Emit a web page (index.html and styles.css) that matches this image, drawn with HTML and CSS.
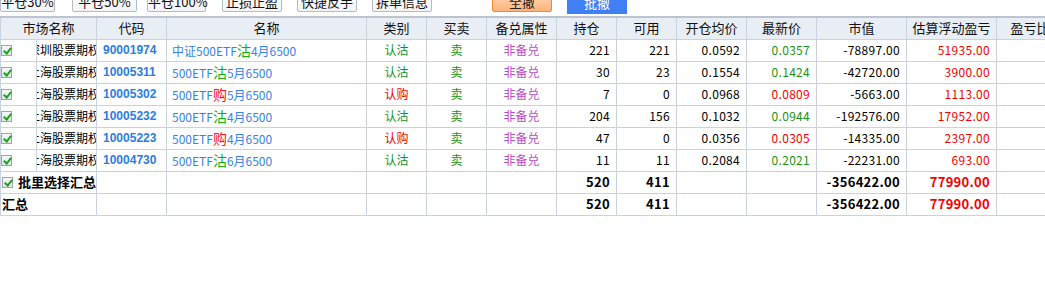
FILE: index.html
```html
<!DOCTYPE html>
<html lang="zh-CN">
<head>
    <meta charset="UTF-8">
    <title>持仓列表</title>
    <link rel="stylesheet" href="styles.css">
</head>
<body>
    <div class="toolbar">
        <button class="tbtn w55">平仓30%</button>
        <button class="tbtn w65 ml17">平仓50%</button>
        <button class="tbtn w59 ml10">平仓100%</button>
        <button class="tbtn w60 ml16">止损止盈</button>
        <button class="tbtn w60 ml15">快捷反手</button>
        <button class="tbtn w60 ml15">拆单信息</button>
        <button class="tbtn cancel-all">全撤</button>
        <button class="tbtn cancel-batch">批撤</button>
    </div>

    <table class="grid">
        <colgroup>
            <col style="width:36px"><col style="width:60px"><col style="width:70px"><col style="width:200px">
            <col style="width:60px"><col style="width:60px"><col style="width:70px"><col style="width:60px">
            <col style="width:60px"><col style="width:70px"><col style="width:70px"><col style="width:90px">
            <col style="width:90px"><col style="width:80px">
        </colgroup>
        <thead>
            <tr>
                <th colspan="2">市场名称</th>
                <th>代码</th>
                <th>名称</th>
                <th>类别</th>
                <th>买卖</th>
                <th>备兑属性</th>
                <th>持仓</th>
                <th>可用</th>
                <th>开仓均价</th>
                <th>最新价</th>
                <th>市值</th>
                <th>估算浮动盈亏</th>
                <th>盈亏比例</th>
            </tr>
        </thead>
        <tbody>
            <tr>
                <td class="chk"><span class="box"></span></td>
                <td><div class="market">深圳股票期权</div></td>
                <td class="code">90001974</td>
                <td class="name">中证500ETF<span class="put">沽</span>4月6500</td>
                <td class="c green">认沽</td>
                <td class="c green">卖</td>
                <td class="c purple">非备兑</td>
                <td class="n">221</td>
                <td class="n">221</td>
                <td class="n">0.0592</td>
                <td class="n green">0.0357</td>
                <td class="n">-78897.00</td>
                <td class="n red">51935.00</td>
                <td></td>
            </tr>
            <tr>
                <td class="chk"><span class="box"></span></td>
                <td><div class="market">上海股票期权</div></td>
                <td class="code">10005311</td>
                <td class="name">500ETF<span class="put">沽</span>5月6500</td>
                <td class="c green">认沽</td>
                <td class="c green">卖</td>
                <td class="c purple">非备兑</td>
                <td class="n">30</td>
                <td class="n">23</td>
                <td class="n">0.1554</td>
                <td class="n green">0.1424</td>
                <td class="n">-42720.00</td>
                <td class="n red">3900.00</td>
                <td></td>
            </tr>
            <tr>
                <td class="chk"><span class="box"></span></td>
                <td><div class="market">上海股票期权</div></td>
                <td class="code">10005302</td>
                <td class="name">500ETF<span class="call">购</span>5月6500</td>
                <td class="c red">认购</td>
                <td class="c green">卖</td>
                <td class="c purple">非备兑</td>
                <td class="n">7</td>
                <td class="n">0</td>
                <td class="n">0.0968</td>
                <td class="n red">0.0809</td>
                <td class="n">-5663.00</td>
                <td class="n red">1113.00</td>
                <td></td>
            </tr>
            <tr>
                <td class="chk"><span class="box"></span></td>
                <td><div class="market">上海股票期权</div></td>
                <td class="code">10005232</td>
                <td class="name">500ETF<span class="put">沽</span>4月6500</td>
                <td class="c green">认沽</td>
                <td class="c green">卖</td>
                <td class="c purple">非备兑</td>
                <td class="n">204</td>
                <td class="n">156</td>
                <td class="n">0.1032</td>
                <td class="n green">0.0944</td>
                <td class="n">-192576.00</td>
                <td class="n red">17952.00</td>
                <td></td>
            </tr>
            <tr>
                <td class="chk"><span class="box"></span></td>
                <td><div class="market">上海股票期权</div></td>
                <td class="code">10005223</td>
                <td class="name">500ETF<span class="call">购</span>4月6500</td>
                <td class="c red">认购</td>
                <td class="c green">卖</td>
                <td class="c purple">非备兑</td>
                <td class="n">47</td>
                <td class="n">0</td>
                <td class="n">0.0356</td>
                <td class="n red">0.0305</td>
                <td class="n">-14335.00</td>
                <td class="n red">2397.00</td>
                <td></td>
            </tr>
            <tr>
                <td class="chk"><span class="box"></span></td>
                <td><div class="market">上海股票期权</div></td>
                <td class="code">10004730</td>
                <td class="name">500ETF<span class="put">沽</span>6月6500</td>
                <td class="c green">认沽</td>
                <td class="c green">卖</td>
                <td class="c purple">非备兑</td>
                <td class="n">11</td>
                <td class="n">11</td>
                <td class="n">0.2084</td>
                <td class="n green">0.2021</td>
                <td class="n">-22231.00</td>
                <td class="n red">693.00</td>
                <td></td>
            </tr>
            <tr class="sum">
                <td colspan="2" class="label"><span class="box"></span>批里选择汇总</td>
                <td></td>
                <td></td>
                <td></td>
                <td></td>
                <td></td>
                <td class="n">520</td>
                <td class="n">411</td>
                <td></td>
                <td></td>
                <td class="n">-356422.00</td>
                <td class="n red">77990.00</td>
                <td></td>
            </tr>
            <tr class="sum">
                <td colspan="2" class="label">汇总</td>
                <td></td>
                <td></td>
                <td></td>
                <td></td>
                <td></td>
                <td class="n">520</td>
                <td class="n">411</td>
                <td></td>
                <td></td>
                <td class="n">-356422.00</td>
                <td class="n red">77990.00</td>
                <td></td>
            </tr>
        </tbody>
    </table>
</body>
</html>
```

FILE: styles.css
```css
* {
    box-sizing: border-box;
}

body {
    margin: 0;
    background: #fff;
    font-family: "Noto Sans CJK SC", "Liberation Sans", sans-serif;
    font-size: 12px;
    color: #000;
    overflow: hidden;
}

/* toolbar is scrolled up, only the lower part of the buttons shows */
.toolbar {
    height: 16px;
    overflow: hidden;
    display: flex;
    align-items: flex-start;
}

.tbtn {
    height: 20px;
    margin-top: -8px;
    padding: 0;
    border: 1px solid #b4bcc8;
    border-radius: 2px;
    background: linear-gradient(#ffffff, #f1f3f6);
    font-family: inherit;
    font-size: 13px;
    line-height: 16px;
    white-space: nowrap;
    color: #111;
}

.w55 { width: 55px; }
.w59 { width: 59px; }
.w60 { width: 60px; }
.w65 { width: 65px; }
.ml10 { margin-left: 10px; }
.ml15 { margin-left: 15px; }
.ml16 { margin-left: 16px; }
.ml17 { margin-left: 17px; }

.cancel-all {
    width: 60px;
    margin-left: 60px;
    border: 1px solid #f08a2c;
    background: linear-gradient(#ffd9b8, #ffb27a);
    color: #222;
}

.cancel-batch {
    width: 60px;
    height: 22px;
    margin-left: 15px;
    border: none;
    border-radius: 0;
    background: #3f80f4;
    color: #fff;
}

.grid {
    table-layout: fixed;
    border-collapse: collapse;
    width: 1076px;
    border-top: 2px solid #bcc4cf;
}

.grid th,
.grid td {
    height: 22px;
    padding: 0;
    border: 1px solid #c9d3de;
    white-space: nowrap;
    overflow: hidden;
    line-height: 20px;
}

.grid th {
    background: #e9eef5;
    font-weight: normal;
    font-size: 13px;
    text-align: center;
    color: #111;
}

.chk {
    text-align: left;
}

.box {
    display: inline-block;
    position: relative;
    width: 11px;
    height: 11px;
    vertical-align: -1px;
    border: 1px solid #9aa6b4;
    background: linear-gradient(#f6f8fa, #dfe4ea);
}

.box::after {
    content: "";
    position: absolute;
    left: 3px;
    top: 0;
    width: 3px;
    height: 6px;
    border: solid #1fa01f;
    border-width: 0 2px 2px 0;
    transform: rotate(40deg);
}

/* market name is wider than its column and gets clipped on both sides */
.market {
    margin-left: -9px;
    white-space: nowrap;
}

.code {
    font-family: "Liberation Sans", sans-serif;
    font-weight: bold;
    color: #2b7ddf;
    padding-left: 6px !important;
}

.name {
    color: #3584e4;
    padding-left: 5px !important;
}

.put {
    color: #10b010;
    font-size: 14px;
}

.call {
    color: #ff1010;
    font-size: 14px;
}

.c {
    text-align: center;
}

.n {
    text-align: right;
    padding-right: 6px !important;
    letter-spacing: 0.3px;
}

.green { color: #179417; }
.red { color: #f40000; }
.purple { color: #b94cc4; }

.sum td {
    font-weight: bold;
    font-size: 13px;
}

.sum .label {
    text-align: left;
    padding-left: 1px !important;
}

.sum .label .box {
    margin-right: 5px;
}
```
